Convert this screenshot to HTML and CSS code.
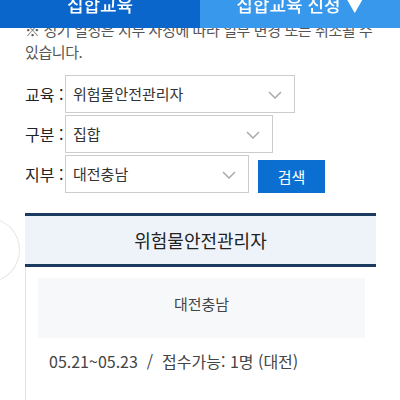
FILE: index.html
```html
<!DOCTYPE html>
<html lang="ko">
<head>
    <meta charset="UTF-8">
    <meta name="viewport" content="width=device-width, initial-scale=1.0">
    <title>집합교육</title>
    <link rel="stylesheet" href="styles.css">
</head>
<body>
    <div class="tabs">
        <a class="tab active">집합교육</a>
        <a class="tab">집합교육 신청 ▼</a>
    </div>

    <div class="page">
        <p class="notice">※ 정기 일정은 지부 사정에 따라 일부 변경 또는 취소될 수 있습니다.</p>

        <div class="search">
            <div class="row">
                <span class="label">교육 :</span>
                <div class="select w1">위험물안전관리자<svg class="chev" viewBox="0 0 14 8"><polyline points="1,1 7,7 13,1"/></svg></div>
            </div>
            <div class="row">
                <span class="label">구분 :</span>
                <div class="select w2">집합<svg class="chev" viewBox="0 0 14 8"><polyline points="1,1 7,7 13,1"/></svg></div>
            </div>
            <div class="row">
                <span class="label">지부 :</span>
                <div class="select w3">대전충남<svg class="chev" viewBox="0 0 14 8"><polyline points="1,1 7,7 13,1"/></svg></div>
                <button class="btn">검색</button>
            </div>
        </div>

        <div class="card">
            <div class="card-head">위험물안전관리자</div>
            <div class="card-body">
                <div class="branch">대전충남</div>
                <p class="sched">05.21~05.23 &nbsp;/&nbsp; 접수가능: 1명 (대전)</p>
            </div>
        </div>
    </div>

    <div class="float-btn"></div>
</body>
</html>
```

FILE: styles.css
```css
body {
    margin: 0;
    font-family: "Noto Sans CJK KR", "Noto Sans", sans-serif;
    color: #333;
    background: #fff;
    overflow: hidden;
}
.tabs {
    position: fixed;
    top: 0;
    left: 0;
    right: 0;
    height: 28px;
    display: flex;
    z-index: 5;
}
.tab {
    flex: 1;
    background: #3898ec;
    color: #fff;
    font-size: 18px;
    font-weight: 500;
    text-align: center;
    line-height: 8px;
}
.tab.active {
    background: #0b66cc;
}
.page {
    padding: 0 20px 0 25px;
}
.notice {
    margin: 19px 0 0;
    font-size: 15px;
    line-height: 22px;
    color: #555;
    letter-spacing: -0.4px;
}
.search {
    margin-top: 12px;
    display: flex;
    flex-direction: column;
    gap: 2px;
}
.row {
    display: flex;
    align-items: center;
    height: 38px;
}
.label {
    width: 40px;
    font-size: 16px;
    color: #222;
}
.select {
    box-sizing: border-box;
    height: 38px;
    border: 1px solid #ccc;
    padding: 0 0 0 7px;
    font-size: 15px;
    line-height: 36px;
    color: #333;
    position: relative;
}
.w1 { width: 230px; }
.w2 { width: 208px; }
.w3 { width: 184px; }
.chev {
    position: absolute;
    right: 12px;
    top: 15px;
    width: 14px;
    height: 8px;
    fill: none;
    stroke: #aaa;
    stroke-width: 1.5;
}
.btn {
    margin-left: 9px;
    margin-top: 5px;
    width: 67px;
    height: 33px;
    border: none;
    background: #0b6fd2;
    color: #fff;
    font-family: inherit;
    font-size: 15px;
    padding: 0;
}
.card {
    margin-top: 20px;
    margin-right: 4px;
}
.card-head {
    border-top: 3px solid #1b3a5e;
    border-bottom: 3px solid #1b3a5e;
    background: #eef3fa;
    height: 48px;
    line-height: 48px;
    text-align: center;
    font-size: 18px;
    color: #222;
}
.card-body {
    border-left: 1px solid #e2e2e2;
    padding: 11px 11px 0 12px;
    height: 200px;
}
.branch {
    background: #f7f8fa;
    height: 60px;
    line-height: 52px;
    text-align: center;
    font-size: 15px;
    color: #444;
}
.sched {
    margin: 11px 0 0 11px;
    font-size: 16px;
    color: #444;
}
.float-btn {
    position: absolute;
    left: -42px;
    top: 218px;
    width: 60px;
    height: 62px;
    border: 1px solid #e6e6e6;
    border-radius: 50%;
    background: #fff;
}
```
